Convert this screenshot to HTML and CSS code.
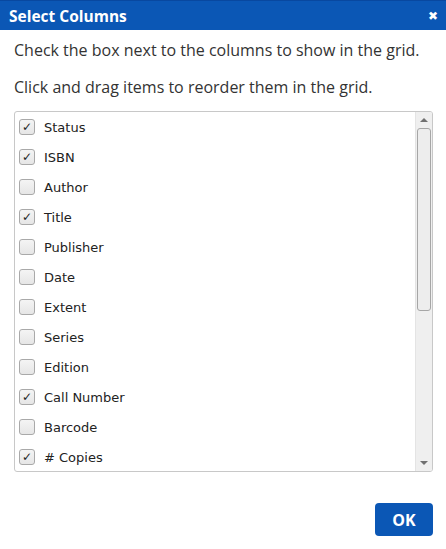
FILE: index.html
```html
<!DOCTYPE html>
<html>
	<head>
		<meta charset="UTF-8">
		<title>Select Columns</title>
		<link rel="stylesheet" href="styles.css">
	</head>
	<body>
		<div class="dialog">
			<div class="head">
				<span class="title">Select Columns</span>
				<span class="close">&#x2716;</span>
			</div>
			<div class="con">
				<p>Check the box next to the columns to show in the grid.</p>
				<p>Click and drag items to reorder them in the grid.</p>
				<div class="list">
					<ul class="box">
						<li><i class="on"></i>Status</li>
						<li><i class="on"></i>ISBN</li>
						<li><i></i>Author</li>
						<li><i class="on"></i>Title</li>
						<li><i></i>Publisher</li>
						<li><i></i>Date</li>
						<li><i></i>Extent</li>
						<li><i></i>Series</li>
						<li><i></i>Edition</li>
						<li><i class="on"></i>Call Number</li>
						<li><i></i>Barcode</li>
						<li><i class="on"></i># Copies</li>
					</ul>
					<div class="bar">
						<b class="up"></b>
						<div class="track"><div class="thumb"></div></div>
						<b class="down"></b>
					</div>
				</div>
			</div>
			<div class="foot">
				<button class="ok">OK</button>
			</div>
		</div>
	</body>
</html>
```
FILE: styles.css
```css
body{
	margin: 0;
	background: #fff;
}
ul,li{
	margin: 0;
	padding: 0;
	list-style: none;
}
.dialog{
	width: 446px;
	height: 549px;
	display: flex;
	flex-direction: column;
	font-family: "Open Sans", "DejaVu Sans", sans-serif;
}
.head{
	height: 30px;
	box-sizing: border-box;
	border-top: 1px solid #0848a0;
	background: #0b57b5;
	color: #fff;
	display: flex;
	align-items: center;
	justify-content: space-between;
	padding: 0 8px 0 9px;
}
.title{
	font: bold 15.5px "Open Sans", sans-serif;
}
.close{
	font: bold 12px "DejaVu Sans", sans-serif;
}
.con{
	padding: 0 13px 0 14px;
}
.con p{
	margin: 0;
	font-size: 16px;
	line-height: 22px;
	color: #333;
}
.con p:first-child{
	margin-top: 9px;
}
.con p + p{
	margin-top: 15px;
}
.list{
	margin-top: 13px;
	height: 361px;
	box-sizing: border-box;
	border: 1px solid #c8c8c8;
	border-radius: 3px;
	display: flex;
	overflow: hidden;
}
.box{
	flex: 1;
	overflow: hidden;
}
.box li{
	height: 30px;
	display: flex;
	align-items: center;
	font: 13px "DejaVu Sans", Verdana, sans-serif;
	color: #222;
}
.box i{
	width: 16px;
	height: 16px;
	box-sizing: border-box;
	margin: 0 9px 0 4px;
	border: 1px solid #a9a9a9;
	border-radius: 3px;
	background: linear-gradient(#f4f4f4, #e6e6e6);
	display: flex;
	align-items: center;
	justify-content: center;
}
.box i.on::after{
	content: "\2713";
	font: bold 12px "DejaVu Sans", sans-serif;
	color: #222;
	line-height: 14px;
}
.bar{
	width: 16px;
	background: #efefef;
	border-left: 1px solid #e4e4e4;
	display: flex;
	flex-direction: column;
	align-items: center;
}
.bar b{
	width: 0;
	height: 0;
	border-left: 4px solid transparent;
	border-right: 4px solid transparent;
}
.up{
	margin-top: 6px;
	border-bottom: 4px solid #707070;
}
.down{
	margin: auto 0 6px;
	border-top: 4px solid #707070;
}
.track{
	width: 100%;
	padding: 6px 1px 0;
	box-sizing: border-box;
}
.thumb{
	height: 181px;
	border: 1px solid #a6a6a6;
	border-radius: 3px;
	background: #ededed;
}
.foot{
	flex: 1;
	display: flex;
	justify-content: flex-end;
	align-items: flex-start;
	padding: 31px 13px 0;
}
.ok{
	width: 58px;
	height: 33px;
	border: 0;
	border-radius: 4px;
	background: #0b57b5;
	color: #fff;
	font: bold 16px "Open Sans", sans-serif;
	cursor: pointer;
}
```
